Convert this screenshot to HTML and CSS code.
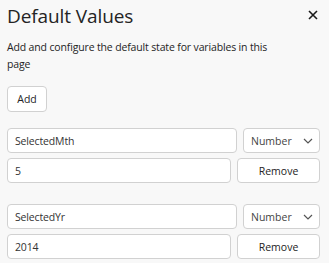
FILE: index.html
```html
<!DOCTYPE html>
<html lang="en">
<head>
    <meta charset="UTF-8">
    <title>Default Values</title>
    <link rel="stylesheet" href="styles.css">
</head>
<body>
    <div class="panel">
        <div class="panel-header">
            <h1>Default Values</h1>
            <button class="close-button" aria-label="Close">
                <svg width="10" height="10" viewBox="0 0 10 10">
                    <path d="M1 1 L9 9 M9 1 L1 9" stroke="#1a1a1a" stroke-width="1.6" fill="none"/>
                </svg>
            </button>
        </div>

        <p class="description">Add and configure the default state for variables in this page</p>

        <button class="btn add-button">Add</button>

        <div class="variable">
            <div class="variable-row">
                <input class="field name-field" type="text" value="SelectedMth">
                <div class="type-select">
                    <span>Number</span>
                    <svg width="10" height="6" viewBox="0 0 10 6">
                        <path d="M1 1 L5 5 L9 1" stroke="#555" stroke-width="1.2" fill="none"/>
                    </svg>
                </div>
            </div>
            <div class="variable-row">
                <input class="field value-field" type="text" value="5">
                <button class="btn remove-button">Remove</button>
            </div>
        </div>

        <div class="variable">
            <div class="variable-row">
                <input class="field name-field" type="text" value="SelectedYr">
                <div class="type-select">
                    <span>Number</span>
                    <svg width="10" height="6" viewBox="0 0 10 6">
                        <path d="M1 1 L5 5 L9 1" stroke="#555" stroke-width="1.2" fill="none"/>
                    </svg>
                </div>
            </div>
            <div class="variable-row">
                <input class="field value-field" type="text" value="2014">
                <button class="btn remove-button">Remove</button>
            </div>
        </div>
    </div>
</body>
</html>
```

FILE: styles.css
```css
* {
    margin: 0;
    padding: 0;
    box-sizing: border-box;
}

body {
    font-family: "Open Sans", "Noto Sans", sans-serif;
    background: #f8f8f8;
    color: #242424;
}

.panel {
    padding: 2px 9px 0 7px;
}

.panel-header {
    display: flex;
    justify-content: space-between;
    align-items: flex-start;
}

h1 {
    font-size: 19px;
    font-weight: 400;
    line-height: 28px;
    letter-spacing: -0.1px;
}

.close-button {
    background: none;
    border: none;
    margin-top: 6px;
    margin-right: 2px;
    width: 10px;
    height: 10px;
    cursor: pointer;
}

.description {
    font-size: 10.5px;
    line-height: 17px;
    letter-spacing: -0.15px;
    margin-top: 9px;
    padding-right: 36px;
}

.btn {
    font-family: inherit;
    font-size: 10.5px;
    color: #242424;
    background: #fff;
    border: 1px solid #d1d1d1;
    border-radius: 4px;
    cursor: pointer;
}

.add-button {
    margin-top: 13px;
    width: 40px;
    height: 26px;
}

.variable {
    margin-top: 16px;
    display: flex;
    flex-direction: column;
    gap: 5px;
}

.variable + .variable {
    margin-top: 21px;
}

.variable-row {
    display: flex;
    gap: 6px;
    height: 25px;
}

.field {
    font-family: inherit;
    font-size: 10.5px;
    letter-spacing: -0.15px;
    color: #333;
    background: #fff;
    border: 1px solid #d1d1d1;
    border-radius: 4px;
    padding: 0 7px;
    outline: none;
}

.name-field {
    width: 230px;
}

.value-field {
    width: 224px;
}

.type-select {
    flex: 1;
    display: flex;
    align-items: center;
    justify-content: space-between;
    padding: 0 6px 0 7px;
    font-size: 10.5px;
    color: #444;
    background: #fff;
    border: 1px solid #d1d1d1;
    border-radius: 4px;
}

.remove-button {
    flex: 1;
}
```
